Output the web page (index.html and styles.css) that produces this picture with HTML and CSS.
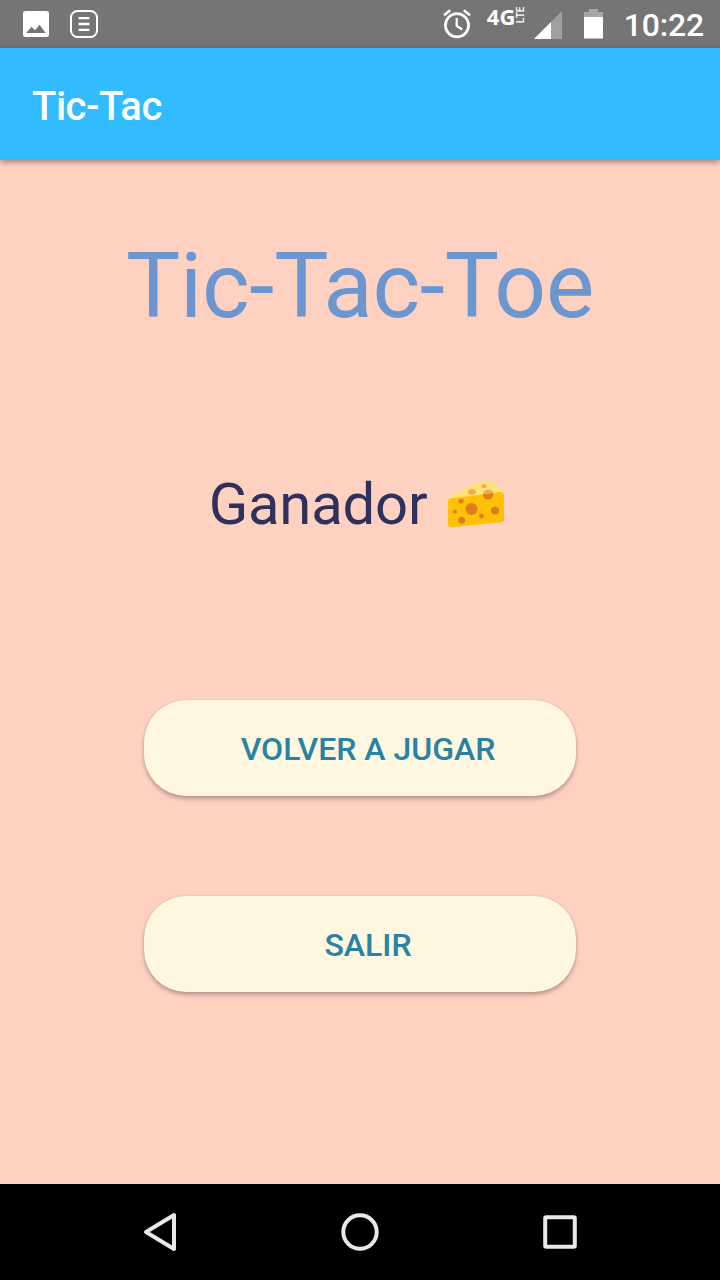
FILE: index.html
```html
<!DOCTYPE html>
<html lang="es">
<head>
<meta charset="utf-8">
<title>Tic-Tac</title>
<link rel="stylesheet" href="styles.css">
</head>
<body>
<div class="screen">
  <header class="status">
    <svg class="icon-photo" width="26" height="26" viewBox="0 0 26 26"><path fill="#fff" fill-rule="evenodd" d="M2.500 0h21A2.500 2.500 0 0 1 26 2.500v21a2.500 2.500 0 0 1-2.500 2.500h-21A2.500 2.500 0 0 1 0 23.500v-21A2.500 2.500 0 0 1 2.500 0zM3.200 22h19.600L16.500 13.700l-4.500 5.500-3.500-3.500z"/></svg>
    <svg class="icon-note" width="28" height="28" viewBox="0 0 28 28" fill="none" stroke="#fff"><rect x="1" y="1" width="26" height="26" rx="6.500" stroke-width="2"/><path d="M8.500 8.200h11M8.500 14h11M8.500 19.800h11" stroke-width="2.300"/></svg>
    <div class="status-right">
      <svg width="28" height="30" viewBox="0 0 28 30" fill="none" stroke="#fff"><circle cx="14" cy="16.300" r="11.600" stroke-width="2.700"/><path d="M13.700 9v8l5.500 3.500" stroke-width="2.200"/><path d="M1 6.200l6.200-5M27 6.200l-6.200-5" stroke-width="2.700"/></svg>
      <div class="network"><span>4G</span><span class="lte">LTE</span></div>
      <svg class="icon-signal" width="28" height="28" viewBox="0 0 28 28"><path fill="#9f9f9f" d="M28 0v28H0z"/><path fill="#fff" d="M17 11v17H0z"/></svg>
      <svg class="icon-battery" width="19" height="30" viewBox="0 0 19 30"><path fill="#a6a6a6" d="M0 8V3h5V0h9v3h5v5z"/><path fill="#fff" d="M0 8h19v21.500H0z"/></svg>
      <span class="clock">10:22</span>
    </div>
  </header>
  <div class="toolbar">Tic-Tac</div>
  <main class="content">
    <h1 class="title">Tic-Tac-Toe</h1>
    <div class="winner">
      <span>Ganador</span>
      <svg class="cheese" width="58" height="48" viewBox="0 0 58 48">
        <path fill="#ffe07a" d="M1 18C14 11 28 1 37 1c10 0 18 6 19 14L3 22z"/>
        <path fill="#ffc107" d="M3.500 18.500L53 12q4 0 4 4v23q0 3-3 3.300L5 47.200q-4 .3-4-4V21q0-2 2.500-2.500z"/>
        <g fill="#dc7d22">
          <circle cx="24.500" cy="29" r="6"/><circle cx="48" cy="30.500" r="4"/><circle cx="14.700" cy="40.300" r="3.500"/><circle cx="34.500" cy="36" r="2.400"/><circle cx="8" cy="31.500" r="2"/>
          <ellipse cx="14" cy="21.300" rx="2.700" ry="2.200"/>
          <path d="M36 14.300l10-1.300v2c0 6-10 6-10 0z"/>
        </g>
        <g fill="#efaa50"><path d="M36 14.200c.5-6 10-6 10-1.200z"/><ellipse cx="25" cy="12" rx="4" ry="2.800"/><ellipse cx="37" cy="6.200" rx="2.700" ry="2"/></g>
      </svg>
    </div>
    <button class="btn">VOLVER A JUGAR</button>
    <button class="btn">SALIR</button>
  </main>
  <nav class="navbar">
    <svg width="40" height="40" viewBox="0 0 40 40"><path d="M34 3v34L6 20z"/></svg>
    <svg width="40" height="40" viewBox="0 0 40 40"><circle cx="20" cy="20" r="16.700"/></svg>
    <svg width="40" height="40" viewBox="0 0 40 40"><rect x="5.200" y="5.200" width="29.600" height="29.600" rx="1"/></svg>
  </nav>
</div>
</body>
</html>
```
FILE: styles.css
```css
* { box-sizing: border-box; }
body { margin: 0; font-family: Roboto, sans-serif; }
.screen { width: 720px; height: 1280px; display: flex; flex-direction: column; background: #ffd1c1; overflow: hidden; }
.status { height: 48px; flex: none; display: flex; align-items: center; padding: 0 16px 0 23px; background: #757575; color: #fff; }
.icon-note { margin-left: 21px; }
.status-right { margin-left: auto; display: flex; align-items: center; height: 48px; }
.network { display: flex; align-items: flex-start; height: 48px; padding-top: 3px; margin-left: 16px; width: 40px; font: 700 22px/26px "Open Sans", sans-serif; }
.lte { writing-mode: vertical-rl; transform: rotate(180deg); font: 600 11px/10px "Open Sans", sans-serif; letter-spacing: -.6px; margin: 4px 0 0 0; }
.icon-signal { margin: 2px 0 0 7px; }
.icon-battery { margin: 0 21px 0 22px; }
.clock { font-size: 32px; font-weight: 500; line-height: 48px; padding-top: 2px; letter-spacing: -.2px; }
.toolbar { height: 112px; flex: none; padding: 3px 32px 0; background: #32bbff; color: #fff; font-size: 40px; font-weight: 500; line-height: 112px; letter-spacing: -.5px; box-shadow: 0 2px 6px rgba(0,0,0,.4); }
.content { flex: 1; display: flex; flex-direction: column; align-items: center; padding-top: 72px; }
.title { margin: 0; font-size: 91px; font-weight: 400; line-height: 108px; letter-spacing: -.25px; color: #6b96cf; }
.winner { display: flex; align-items: center; height: 72px; margin: 128px 0 160px; padding-right: 6px; font-size: 58px; letter-spacing: -.2px; color: #30305c; }
.cheese { margin-left: 20px; }
.btn { width: 432px; height: 96px; flex: none; margin: 0 0 100px; padding: 1px 0 0 16px; border: 0; border-radius: 42px; background: #fff7e0; color: #2882a3; font: 500 32px/40px Roboto, sans-serif; box-shadow: 0 3px 4px rgba(0,0,0,.26), 0 0 2px rgba(0,0,0,.15); }
.navbar { height: 96px; flex: none; display: flex; align-items: center; justify-content: space-between; padding: 0 140px; background: #000; }
.navbar svg { fill: none; stroke: #e9e9e9; stroke-width: 4; stroke-linejoin: round; }
```
